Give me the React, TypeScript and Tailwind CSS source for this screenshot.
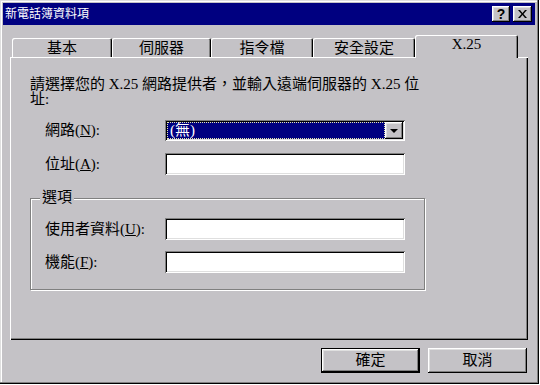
import React from "react";

const font = "font-['Liberation_Serif','Noto_Sans_CJK_TC',serif]";
const raised =
  "shadow-[inset_-1px_-1px_0_#000,inset_1px_1px_0_#fff,inset_-2px_-2px_0_#808080,inset_2px_2px_0_#dfdfdf]";
const sunken =
  "shadow-[inset_1px_1px_0_#808080,inset_-1px_-1px_0_#fff,inset_2px_2px_0_#000,inset_-2px_-2px_0_#dfdfdf]";

function Tab({ label, width, active }: { label: string; width: string; active?: boolean }) {
  if (active) {
    return (
      <div
        className={`${width} h-[23px] -mb-[1px] relative z-10 bg-[#c4c2c6] rounded-t-[2px] flex justify-center pt-[2px] text-[15px] leading-[15px] shadow-[inset_1px_1px_0_#fff,inset_-1px_0_0_#000,inset_-2px_0_0_#808080]`}
      >
        {label}
      </div>
    );
  }
  return (
    <div
      className={`${width} h-[19px] rounded-t-[2px] flex justify-center pt-[3px] text-[15px] leading-[15px] shadow-[inset_1px_1px_0_#fff,inset_-1px_0_0_#000,inset_-2px_0_0_#808080]`}
    >
      {label}
    </div>
  );
}

function Field() {
  return <div className={`w-[240px] h-[22px] bg-white ${sunken}`} />;
}

function Label({ text, keyChar }: { text: string; keyChar: string }) {
  return (
    <div className="w-[120px] text-[15px] leading-[15px]">
      {text}(<span className="underline">{keyChar}</span>):
    </div>
  );
}

export default function App() {
  return (
    <div
      className={`w-[540px] h-[385px] bg-[#c4c2c6] ${font} text-black flex flex-col p-[3px] shadow-[inset_-1px_-1px_0_#fff,inset_-2px_-2px_0_#000,inset_-3px_-3px_0_#808080,inset_1px_1px_0_#dfdfdf,inset_2px_2px_0_#fff]`}
    >
      {/* title bar */}
      <div className="h-[22px] w-[532px] bg-[#000080] flex items-center pl-[2px] pr-[3px]">
        <span className="text-white text-[12px] leading-[12px] flex-1">新電話簿資料項</span>
        <div className="flex gap-[3px]">
          <div className={`w-[18px] h-[16px] bg-[#c4c2c6] ${raised} flex items-center justify-center font-['Liberation_Sans',sans-serif] font-bold text-[14px] leading-[14px]`}>
            ?
          </div>
          <div className={`w-[19px] h-[16px] bg-[#c4c2c6] ${raised} flex items-center justify-center`}>
            <svg width="9" height="8" viewBox="0 0 9 8">
              <path d="M0 0h2l2.5 3L7 0h2L5.5 4 9 8H7L4.5 5 2 8H0l3.5-4z" fill="#000" />
            </svg>
          </div>
        </div>
      </div>

      {/* tabs */}
      <div className="ml-[7px] mt-[10px] w-[518px] flex flex-col">
        <div className="flex items-end h-[22px] pl-[2px]">
          <Tab label="基本" width="w-[100px]" />
          <Tab label="伺服器" width="w-[99px]" />
          <Tab label="指令檔" width="w-[102px]" />
          <Tab label="安全設定" width="w-[102px]" />
          <Tab label="X.25" width="w-[103px]" active />
        </div>

        {/* panel */}
        <div className="h-[283px] pt-[20px] pl-[20px] shadow-[inset_1px_1px_0_#fff,inset_-1px_-1px_0_#000,inset_-2px_-2px_0_#808080]">
          <p className="text-[15px] leading-[15px]">
            請選擇您的 X.25 網路提供者，並輸入遠端伺服器的 X.25 位
            <br />
            址:
          </p>

          <div className="mt-[13px] pl-[15px] flex items-center">
            <Label text="網路" keyChar="N" />
            <div className={`w-[240px] h-[21px] bg-white ${sunken} p-[2px] flex`}>
              <div className="flex-1 bg-[#000080] border border-dotted border-[#e8e8b0] text-white text-[15px] leading-[15px] pl-[2px] flex items-center">
                (無)
              </div>
              <div className={`w-[18px] bg-[#c4c2c6] ${raised} flex items-center justify-center`}>
                <svg width="8" height="4" viewBox="0 0 8 4">
                  <path d="M0 0h8L4 4z" fill="#000" />
                </svg>
              </div>
            </div>
          </div>

          <div className="mt-[12px] pl-[15px] flex items-center">
            <Label text="位址" keyChar="A" />
            <Field />
          </div>

          {/* group box */}
          <div className="relative mt-[23px] w-[395px] h-[92px] border border-[#808080] shadow-[1px_1px_0_#fff,inset_1px_1px_0_#fff] pt-[19px] pl-[14px] flex flex-col gap-[11px]">
            <span className="absolute left-[9px] -top-[9px] px-[2px] bg-[#c4c2c6] text-[15px] leading-[15px]">選項</span>
            <div className="flex items-center">
              <Label text="使用者資料" keyChar="U" />
              <Field />
            </div>
            <div className="flex items-center">
              <Label text="機能" keyChar="F" />
              <Field />
            </div>
          </div>
        </div>

        {/* buttons */}
        <div className="mt-[8px] flex justify-end gap-[8px] pr-[1px]">
          <div className="w-[99px] h-[25px] border border-black">
            <div className={`w-full h-full ${raised} flex items-center justify-center text-[15px] leading-[15px]`}>確定</div>
          </div>
          <div className={`w-[99px] h-[25px] ${raised} flex items-center justify-center text-[15px] leading-[15px]`}>取消</div>
        </div>
      </div>
    </div>
  );
}
